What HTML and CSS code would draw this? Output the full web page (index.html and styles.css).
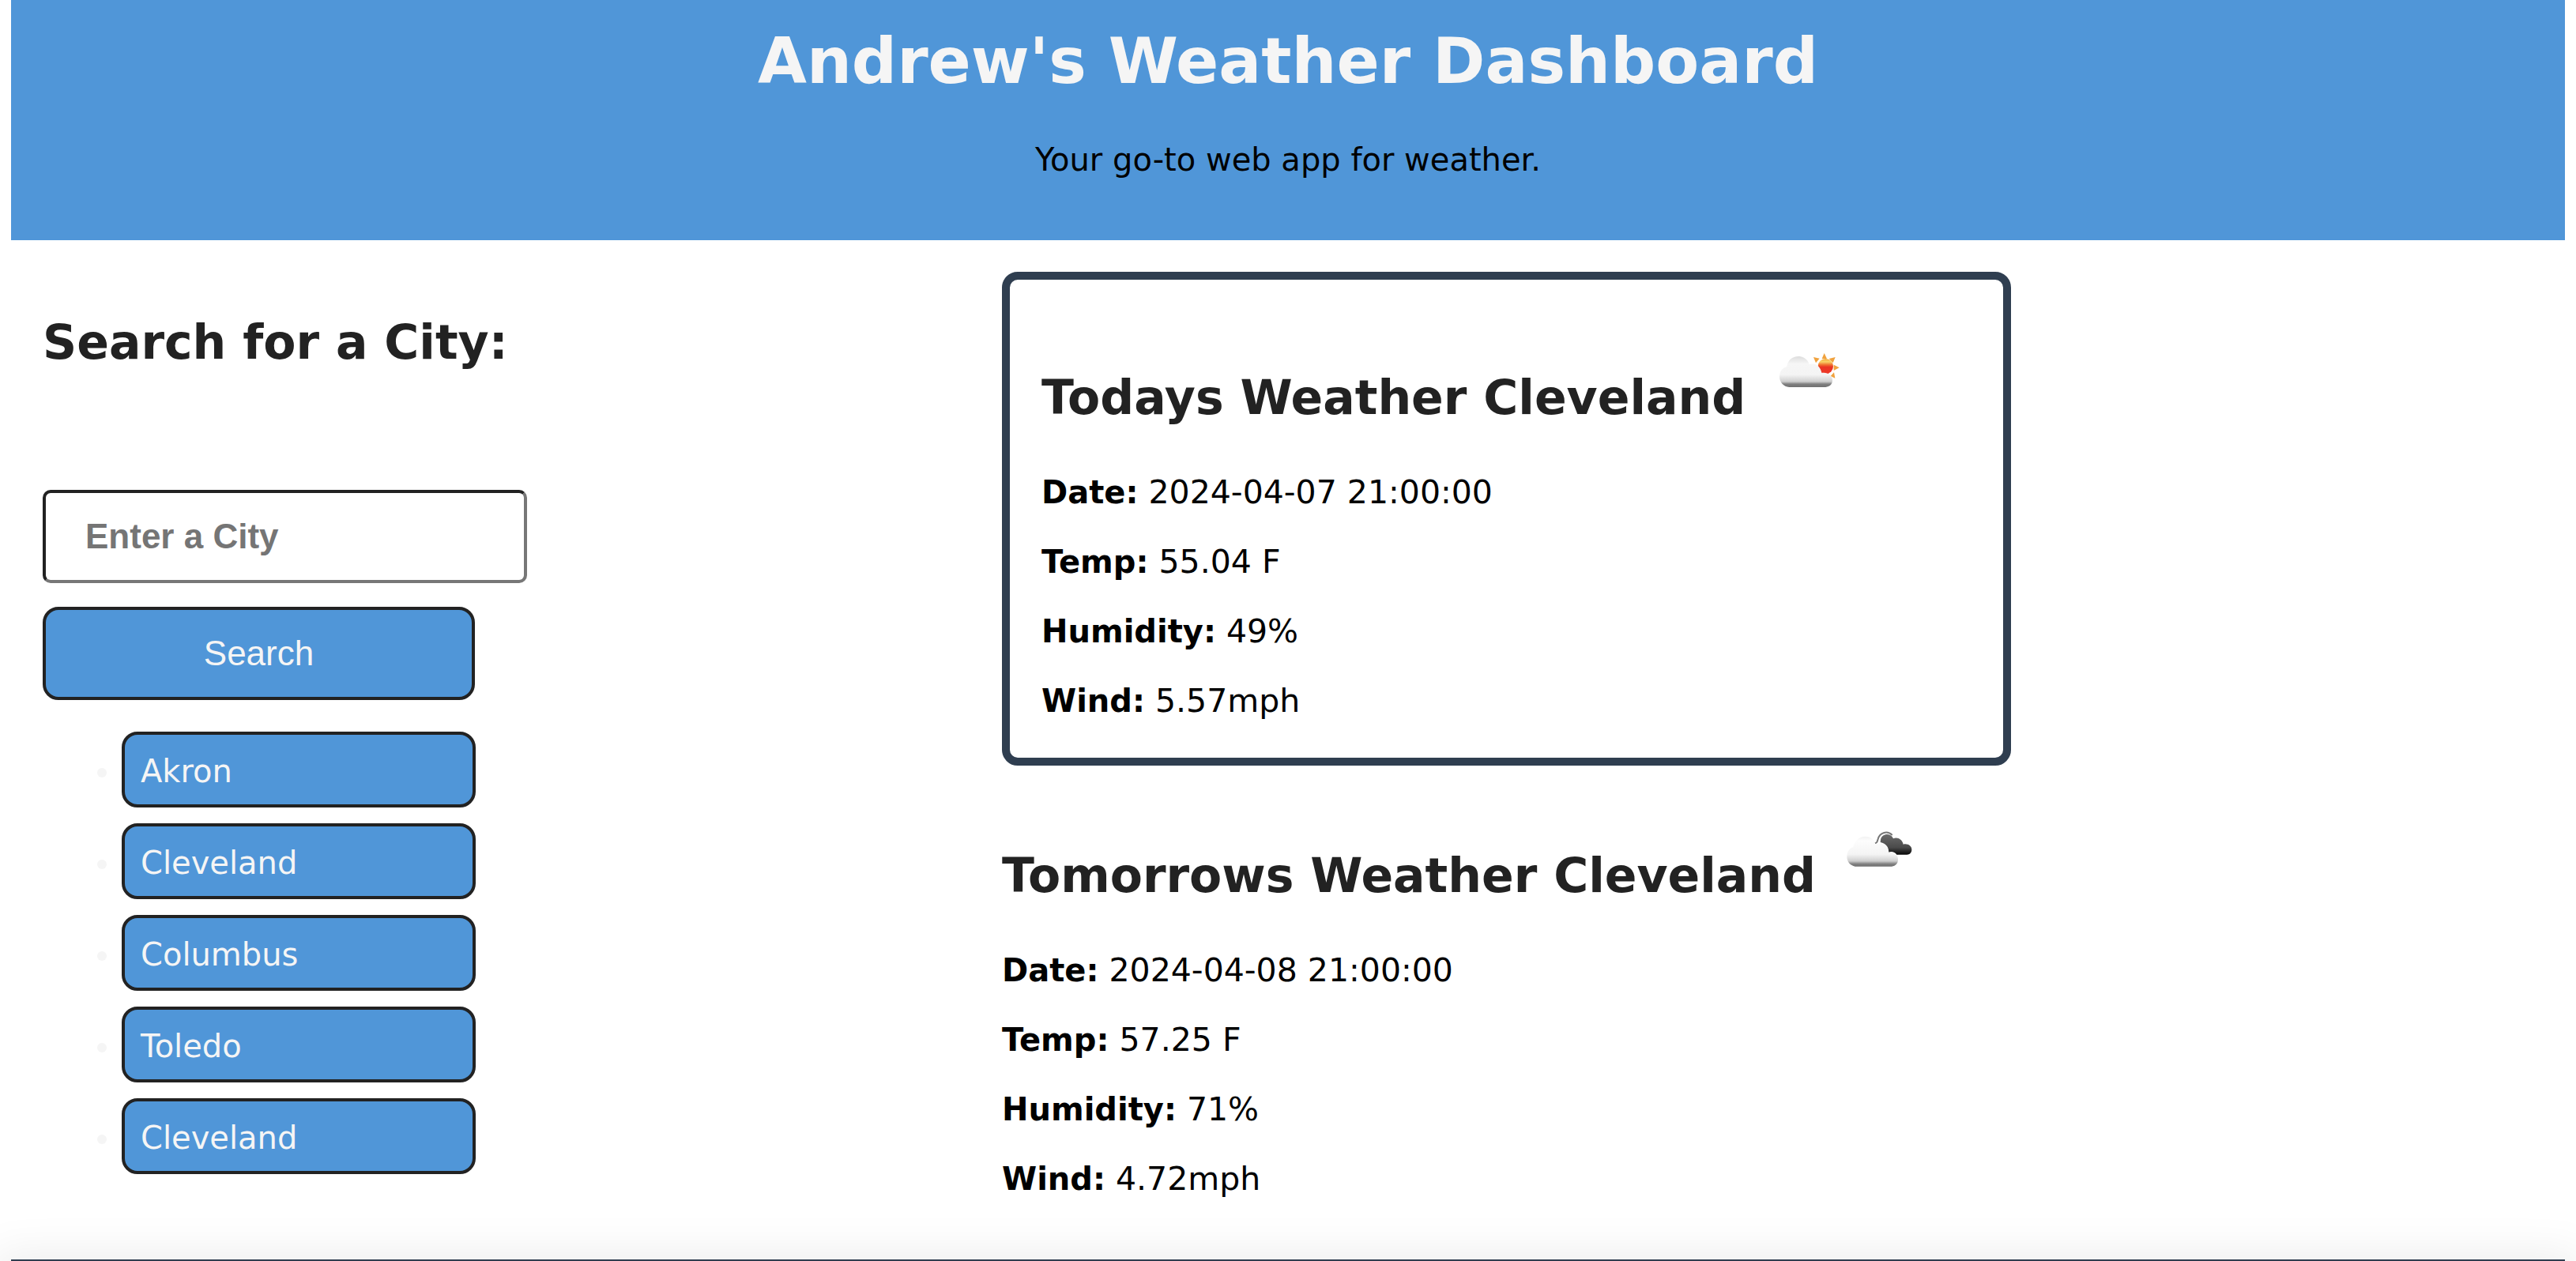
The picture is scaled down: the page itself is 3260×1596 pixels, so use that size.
FILE: index.html
```html
<!DOCTYPE html>
<html lang="en">
<head>
  <meta charset="UTF-8">
  <meta name="viewport" content="width=device-width, initial-scale=1">
  <title>Andrew's Weather Dashboard</title>
  <link rel="stylesheet" href="styles.css">
</head>
<body>
  <header class="banner">
    <h1 class="banner-title">Andrew's Weather Dashboard</h1>
    <p class="banner-text">Your go-to web app for weather.</p>
  </header>

  <main class="dashboard">
    <section class="search">
      <h2 class="heading"><label for="city">Search for a City:</label></h2>
      <form class="search-form">
        <input class="search-input" id="city" type="text" placeholder="Enter a City">
        <button class="search-button" type="button">Search</button>
      </form>
      <ul class="history">
        <li class="history-item">Akron</li>
        <li class="history-item">Cleveland</li>
        <li class="history-item">Columbus</li>
        <li class="history-item">Toledo</li>
        <li class="history-item">Cleveland</li>
      </ul>
    </section>

    <div class="forecasts">
      <section class="forecast forecast-today">
        <h2 class="heading">Todays Weather Cleveland
          <svg class="icon" viewBox="117 72 300 300" role="img" aria-label="Few clouds">
            <defs>
              <linearGradient id="sun" x1="0" y1="0" x2="0" y2="1">
                <stop offset="0" stop-color="#f3a73c"/>
                <stop offset=".2" stop-color="#f8d568"/>
                <stop offset=".4" stop-color="#f0702f"/>
                <stop offset=".55" stop-color="#ea3323"/>
                <stop offset="1" stop-color="#ee3a28"/>
              </linearGradient>
              <linearGradient id="cloud" gradientUnits="userSpaceOnUse" x1="0" y1="152" x2="0" y2="270">
                <stop offset="0" stop-color="#dcdcdc"/>
                <stop offset=".25" stop-color="#f6f6f6"/>
                <stop offset=".6" stop-color="#f4f4f4"/>
                <stop offset=".82" stop-color="#cfcfcf"/>
                <stop offset=".9" stop-color="#808080"/>
                <stop offset="1" stop-color="#707070"/>
              </linearGradient>
            </defs>
            <path fill="#f0a23e" d="M323 141l10 21h-19zM282 156l23 5-14 17zM365 156l-9 22-15-16zM380 196l-21 11v-22zM364 236l-17-8 13-14z"/>
            <circle cx="328" cy="191" r="29" fill="url(#sun)"/>
            <path fill="url(#cloud)" d="M190 270C168 268 153 250 153 230C153 210 166 196 181 192C183 169 202 153 225 153C244 153 260 165 266 183C288 176 309 190 313 216C334 212 354 224 354 244C354 259 344 268 328 270Z"/>
          </svg>
        </h2>
        <p class="reading"><strong class="label">Date:</strong> 2024-04-07 21:00:00</p>
        <p class="reading"><strong class="label">Temp:</strong> 55.04 F</p>
        <p class="reading"><strong class="label">Humidity:</strong> 49%</p>
        <p class="reading"><strong class="label">Wind:</strong> 5.57mph</p>
      </section>

      <section class="forecast">
        <h2 class="heading">Tomorrows Weather Cleveland
          <svg class="icon" viewBox="90 27 300 300" role="img" aria-label="Broken clouds">
            <defs>
              <linearGradient id="dark" x1="0" y1="0" x2="0" y2="1">
                <stop offset="0" stop-color="#6b6b6b"/>
                <stop offset=".65" stop-color="#4a4a4a"/>
                <stop offset="1" stop-color="#050505"/>
              </linearGradient>
              <linearGradient id="light" gradientUnits="userSpaceOnUse" x1="0" y1="115" x2="0" y2="230">
                <stop offset="0" stop-color="#f1f1f1"/>
                <stop offset=".15" stop-color="#fdfdfd"/>
                <stop offset=".6" stop-color="#f4f4f4"/>
                <stop offset=".82" stop-color="#cfcfcf"/>
                <stop offset=".92" stop-color="#808080"/>
                <stop offset="1" stop-color="#707070"/>
              </linearGradient>
            </defs>
            <path fill="url(#dark)" d="M243 128C246 108 278 98 291 124C306 117 325 126 329 146C345 142 361 151 361 166C361 178 353 185 343 185H304C297 175 285 172 274 176C273 155 264 144 242 138Z"/>
            <path fill="none" stroke="#777" stroke-width="6" d="M219 143C229 141 230 137 233 126C240 100 269 93 287 111"/>
            <path fill="url(#light)" d="M146 230C128 227 115 212 115 193C115 174 126 160 139 156C144 132 162 116 185 116C204 116 217 126 223 144C249 137 272 151 274 177C294 173 309 186 309 203C309 218 301 227 285 230Z"/>
          </svg>
        </h2>
        <p class="reading"><strong class="label">Date:</strong> 2024-04-08 21:00:00</p>
        <p class="reading"><strong class="label">Temp:</strong> 57.25 F</p>
        <p class="reading"><strong class="label">Humidity:</strong> 71%</p>
        <p class="reading"><strong class="label">Wind:</strong> 4.72mph</p>
      </section>
    </div>
  </main>

  <footer class="footer"></footer>
</body>
</html>
```
FILE: styles.css
```css
* {
  box-sizing: border-box;
}

body {
  display: flex;
  flex-direction: column;
  min-height: 100vh;
  margin: 0;
  padding: 0 14px;
  background: #fff;
  color: #000;
  font-family: Verdana, "DejaVu Sans", sans-serif;
  font-size: 40px;
  line-height: 48px;
}

h1,
h2,
p,
ul {
  margin: 0;
}

.banner {
  padding: 30px 0 78px;
  background: #5096d8;
  text-align: center;
}

.banner-title {
  margin-bottom: 52px;
  color: #f5f5f5;
  font-size: 80px;
  line-height: 96px;
}

.dashboard {
  display: flex;
  padding-top: 40px;
}

.heading {
  color: #222;
  font-size: 60px;
  line-height: 72px;
}

.search {
  width: 38.8%;
  padding: 53px 40px 0;
}

.search-form {
  display: flex;
  flex-direction: column;
  align-items: flex-start;
  gap: 30px;
  margin: 151px 0 40px;
}

.search-input,
.search-button {
  height: 118px;
  font-family: Arial, "Liberation Sans", sans-serif;
  font-size: 44px;
}

.search-input {
  width: 613px;
  padding: 0 50px;
  border: 4px solid;
  border-color: #222 #777 #777 #222;
  border-radius: 10px;
  background: #fff;
  font-weight: bold;
}

.search-input::placeholder {
  color: #757575;
}

.search-button {
  width: 547px;
  border: 4px solid #222;
  border-radius: 20px;
  background: #5096d8;
  color: #f5f5f5;
}

.history {
  display: flex;
  flex-direction: column;
  gap: 20px;
  width: 548px;
  padding-left: 100px;
}

.history-item {
  padding: 22px 20px 18px;
  border: 4px solid #222;
  border-radius: 20px;
  background: #5096d8;
  color: #f5f5f5;
}

.forecasts {
  width: 39.5%;
}

.forecast {
  padding: 60px 0 78px;
}

.forecast-today {
  padding: 70px 40px 48px;
  border: 10px solid #2f3e50;
  border-radius: 20px;
}

.icon {
  width: 100px;
  height: 100px;
  margin-left: 10px;
}

.forecast .heading {
  margin-bottom: 60px;
}

.reading {
  font-size: 41px;
}

.reading + .reading {
  margin-top: 40px;
}

.label {
  font-size: 40px;
}

.footer {
  flex: 1;
  background: #2f3e50;
  box-shadow: 0 20px 60px 20px rgba(0, 0, 0, 0.1);
}
```
